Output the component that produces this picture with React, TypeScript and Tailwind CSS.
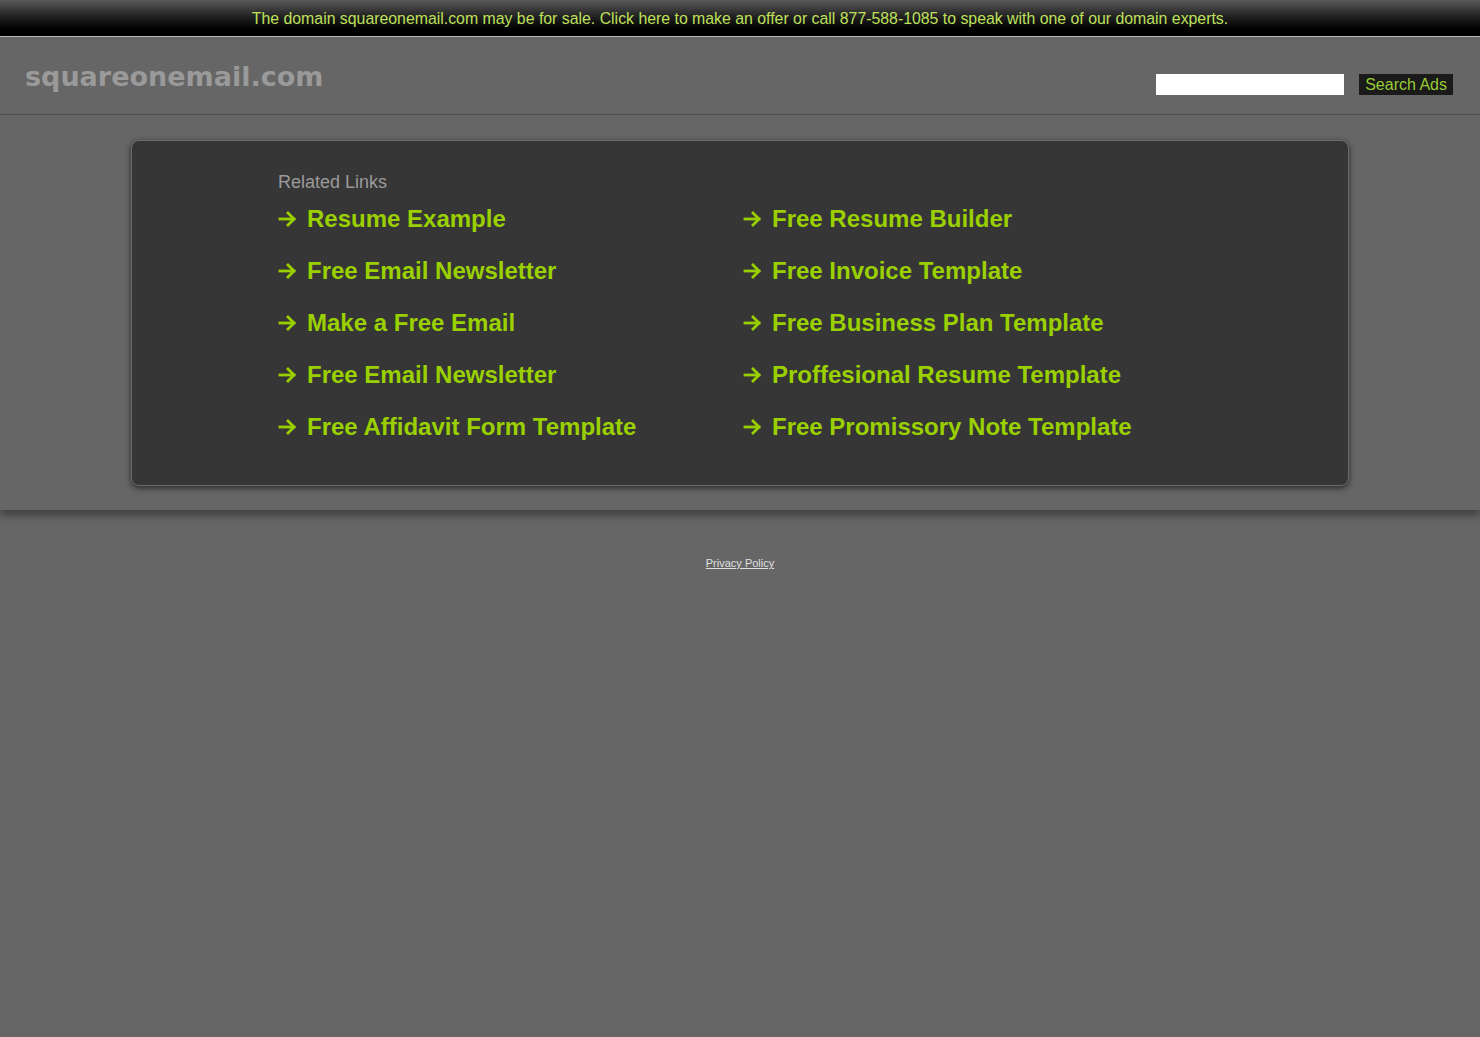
const left = ['Resume Example', 'Free Email Newsletter', 'Make a Free Email', 'Free Email Newsletter', 'Free Affidavit Form Template']
const right = [
  'Free Resume Builder',
  'Free Invoice Template',
  'Free Business Plan Template',
  'Proffesional Resume Template',
  'Free Promissory Note Template',
]

function Arrow() {
  return (
    <svg width="19" height="16" viewBox="0 0 19 16" className="mr-[10px] shrink-0" fill="none" stroke="currentColor" strokeWidth="2.8" strokeLinecap="square">
      <path d="M2 8h14" />
      <path d="M10 2l6 6-6 6" />
    </svg>
  )
}

function LinkItem({ label }: { label: string }) {
  return (
    <li className="flex h-[52px] items-center">
      <a href="#" className="-mt-[8px] flex items-center text-[24px] font-bold text-[#9bd000] no-underline">
        <Arrow />
        {label}
      </a>
    </li>
  )
}

export default function App() {
  return (
    <div className="min-h-[1037px] bg-[#666666] font-['Liberation_Sans',Arial,sans-serif]">
      <div className="flex h-[37px] items-center justify-center border-b border-[#bbbbbb] bg-gradient-to-b from-[#5a5a5a] to-[#000000] pt-[1px] text-[15.85px] text-[#bfe05a]">
        The domain squareonemail.com may be for sale. Click here to make an offer or call 877-588-1085 to speak with one of our domain experts.
      </div>

      <header className="flex h-[78px] items-start justify-between border-b border-[#4e4e4e] px-[25px]">
        <div className="pt-[24px] font-['DejaVu_Sans',Verdana,sans-serif] text-[27px] font-bold leading-[32px] text-[#9a9a9a]">
          squareonemail.com
        </div>
        <div className="mr-[2px] flex items-center gap-[15px] pt-[37px]">
          <input className="h-[21px] w-[188px] bg-white outline-none" />
          <button className="h-[21px] bg-[#1a1a1a] px-[6px] text-[16px] leading-[21px] text-[#99cc33]">Search Ads</button>
        </div>
      </header>

      <main className="pb-[24px] pt-[25px] shadow-[0_6px_8px_rgba(0,0,0,0.35)]">
        <div className="mx-auto w-[1218px] rounded-[8px] border border-[#6a6a6a] bg-[#363636] pb-[28px] pl-[146px] pt-[30px] shadow-[0_2px_6px_rgba(0,0,0,0.6)]">
          <h2 className="text-[18px] leading-[22px] text-[#9a9a9a]">Related Links</h2>
          <div className="mt-[4px] flex">
            <ul className="w-[465px]">
              {left.map((l, i) => (
                <LinkItem key={i} label={l} />
              ))}
            </ul>
            <ul>
              {right.map((l, i) => (
                <LinkItem key={i} label={l} />
              ))}
            </ul>
          </div>
        </div>
      </main>

      <footer className="pt-[40px] text-center">
        <a href="#" className="text-[11px] text-[#e0e0e0] underline">Privacy Policy</a>
      </footer>
    </div>
  )
}
